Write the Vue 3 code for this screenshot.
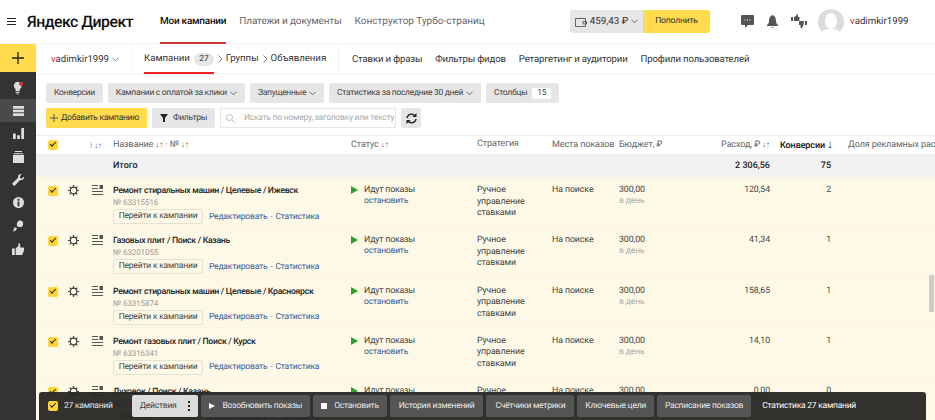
<template>
  <div class="page">
    <header class="top">
      <div class="burger"><i></i><i></i><i></i></div>
      <div class="logo">Яндекс Директ</div>
      <nav class="top-nav">
        <a class="active">Мои кампании</a>
        <a class="pay-link">Платежи и документы</a>
        <a>Конструктор Турбо-страниц</a>
      </nav>
      <div class="wallet">
        <span class="balance">
          <svg width="12" height="10" viewBox="0 0 12 10"><path d="M.5 1.500h10v8H.5zM8 4.500h3.500V7H8z" fill="none" stroke="#666"/></svg>
          <span>459,43 ₽</span>
          <svg width="7" height="5" viewBox="0 0 8 5"><path d="M.5.5 4 4 7.500.5" fill="none" stroke="#555"/></svg>
        </span>
        <span class="pay">Пополнить</span>
      </div>
      <div class="tools">
        <svg width="13" height="13" viewBox="0 0 13 13"><path d="M1 0h11a1 1 0 0 1 1 1v8a1 1 0 0 1-1 1H7l-3 3v-3H1a1 1 0 0 1-1-1V1a1 1 0 0 1 1-1z" fill="#555"/><path d="M3.500 5h1M6 5h1M8.500 5h1" stroke="#fff"/></svg>
        <svg width="11" height="13" viewBox="0 0 11 13"><path d="M5.500 0C3 1 2 3 2 6c0 2-1 3-2 4v1h11v-1c-1-1-2-2-2-4 0-3-1-5-3.500-6zM4 12h3l-1.500 1z" fill="#555"/></svg>
        <svg width="16" height="15" viewBox="0 0 16 15"><path d="M0 3h2v4H0zM3 3l2-1 1-2 1 1v2h1.500v3a1 1 0 0 1-1 1H3zM16 11h-2V7h2zM13 7H9a1 1 0 0 0-1 1v3h1.500v2l1 2 1.500-3 .5-1z" fill="#555"/></svg>
      </div>
      <svg class="avatar" width="26" height="26" viewBox="0 0 26 26"><circle cx="13" cy="13" r="13" fill="#dcdcdc"/><ellipse cx="13" cy="12" rx="6" ry="8" fill="#fff"/><path d="M4 23c3-3 5-3 9-3s6 0 9 3a13 13 0 0 1-18 0z" fill="#fff"/></svg>
      <span class="user"><b>v</b>adimkir1999</span>
    </header>

    <div class="body">
      <aside class="side">
        <div class="plus"><svg width="12" height="12" viewBox="0 0 12 12"><path d="M6 0v12M0 6h12" stroke="#222" stroke-width="1.300"/></svg></div>
        <div class="side-list">
          <div v-for="(item, i) in sideIcons" :key="item" class="side-item" :class="{ current: i === 1 }" v-html="item"></div>
        </div>
      </aside>

      <main class="main">
        <div class="subnav">
          <div class="account"><span><b>v</b>adimkir1999</span>
            <svg width="7" height="5" viewBox="0 0 8 5"><path d="M.5.5 4 4 7.500.5" fill="none" stroke="#666"/></svg>
          </div>
          <div class="crumbs">
            <a class="active">Кампании <span class="count">27</span></a>
            <svg class="sep" width="5" height="8" viewBox="0 0 5 8"><path d="M.5.5 4 4 .5 7.500" fill="none" stroke="#777"/></svg>
            <a>Группы</a>
            <svg class="sep" width="5" height="8" viewBox="0 0 5 8"><path d="M.5.5 4 4 .5 7.500" fill="none" stroke="#777"/></svg>
            <a>Объявления</a>
          </div>
          <div class="links">
            <a v-for="l in subLinks" :key="l">{{ l }}</a>
          </div>
        </div>

        <div class="filters">
          <span v-for="f in filterButtons" :key="f.text" class="btn">{{ f.text }}
            <svg v-if="f.arrow" width="7" height="5" viewBox="0 0 8 5"><path d="M.5.5 4 4 7.500.5" fill="none" stroke="#555"/></svg>
          </span>
          <span class="btn">Столбцы <span class="pill">15</span></span>
        </div>

        <div class="actions">
          <span class="btn add"><span class="add-plus"><svg width="8" height="8" viewBox="0 0 8 8"><path d="M4 0v8M0 4h8" stroke="#555"/></svg></span> Добавить кампанию</span>
          <span class="btn filter">
            <svg width="8" height="8" viewBox="0 0 8 8"><path d="M0 0h8L5 4v4H3V4z" fill="#222"/></svg>
            Фильтры
          </span>
          <div class="search">
            <svg width="9" height="9" viewBox="0 0 9 9"><circle cx="3.500" cy="3.500" r="3" fill="none" stroke="#bbb"/><path d="m6 6 3 3" stroke="#bbb"/></svg>
            <span>Искать по номеру, заголовку или тексту</span>
          </div>
          <span class="btn refresh">
            <svg width="11" height="11" viewBox="0 0 11 11"><path d="M1 5a4.500 4.500 0 0 1 8-2M10 6a4.500 4.500 0 0 1-8 2" fill="none" stroke="#222" stroke-width="1.500"/><path d="M10.500 0v4h-4zM.5 11V7h4z" fill="#222"/></svg>
          </span>
        </div>

        <div class="table">
          <div class="row head">
            <div class="c-check"><span class="check"></span></div>
            <div class="c-sort"><em>⁞</em><em>↓↑</em></div>
            <div class="c-name">Название <em>↓↑</em> · № <em>↓↑</em></div>
            <div class="c-status">Статус <em>↓↑</em></div>
            <div class="c-strat">Стратегия</div>
            <div class="c-place">Места показов</div>
            <div class="c-budget">Бюджет, ₽</div>
            <div class="c-spend">Расход, ₽ <em>↓↑</em></div>
            <div class="c-conv strong">Конверсии <span class="down">↓</span></div>
            <div class="c-share">Доля рекламных расходов</div>
          </div>
          <div class="row total">
            <div class="c-check"></div>
            <div class="c-sort"></div>
            <div class="c-name">Итого</div>
            <div class="c-status"></div>
            <div class="c-strat"></div>
            <div class="c-place"></div>
            <div class="c-budget"></div>
            <div class="c-spend">2 306,56</div>
            <div class="c-conv">75</div>
            <div class="c-share"></div>
          </div>
          <div v-for="c in campaigns" :key="c.id" class="row item">
            <div class="c-check"><span class="check"></span></div>
            <div class="c-sort">
              <svg class="gear" width="11" height="11" viewBox="0 0 12 12"><circle cx="6" cy="6" r="3.600" fill="none" stroke="#444" stroke-width="1.300"/><path d="M6 0v2.500M6 9.500V12M0 6h2.500M9.500 6H12M1.800 1.800l1.800 1.800M8.400 8.400l1.800 1.800M10.200 1.800 8.400 3.600M3.600 8.400l-1.800 1.800" stroke="#444" stroke-width="1.300"/></svg>
              <svg class="lines" width="11" height="10" viewBox="0 0 11 10"><path d="M0 .5h6M0 3.500h6M0 6.500h11M0 9.500h11" stroke="#555"/><rect x="7.500" width="3.500" height="4" fill="#555"/></svg>
            </div>
            <div class="c-name">
              <div class="title">{{ c.name }}</div>
              <div class="num">№ {{ c.id }}</div>
              <div class="links-row">
                <span class="goto">Перейти к кампании</span>
                <a>Редактировать</a> <span class="dot">-</span> <a>Статистика</a>
              </div>
            </div>
            <div class="c-status">
              <div class="running"><span class="play"></span>Идут показы</div>
              <a class="stop">остановить</a>
            </div>
            <div class="c-strat">Ручное управление ставками</div>
            <div class="c-place">На поиске</div>
            <div class="c-budget">300,00<div class="per">в день</div></div>
            <div class="c-spend">{{ c.spend }}</div>
            <div class="c-conv">{{ c.conv }}</div>
            <div class="c-share"></div>
          </div>
        </div>

        <div class="scroll-thumb"></div>

        <div class="bulk">
          <span class="check"></span>
          <span class="bulk-count">27 кампаний</span>
          <span class="bulk-btn light">Действия <span class="dots"><i></i><i></i><i></i></span></span>
          <span class="bulk-btn"><span class="tri"></span>Возобновить показы</span>
          <span class="bulk-btn"><span class="sq"></span>Остановить</span>
          <span class="bulk-btn wide">История изменений</span>
          <span class="bulk-btn wide">Счётчики метрики</span>
          <span class="bulk-btn">Ключевые цели</span>
          <span class="bulk-btn">Расписание показов</span>
          <span class="bulk-plain">Статистика 27 кампаний</span>
        </div>
      </main>
    </div>
  </div>
</template>

<script setup>
const sideIcons = [
  '<svg width="11" height="14" viewBox="0 0 13 15"><path d="M5 0a5 5 0 0 1 3 9v2H3V9a5 5 0 0 1 2-9zM3 12h5v1H3zM4 14h3v1H4z" fill="#ddd"/><circle cx="9.500" cy="2.500" r="2.500" fill="#e0303a"/></svg>',
  '<svg width="11" height="10" viewBox="0 0 12 11"><path d="M0 0h12v3H0zM0 4h12v3H0zM0 8h12v3H0z" fill="#ddd"/></svg>',
  '<svg width="11" height="11" viewBox="0 0 12 12"><path d="M0 6h3v6H0zM4.500 8h3v4h-3zM9 0h3v12H9z" fill="#ddd"/></svg>',
  '<svg width="11" height="12" viewBox="0 0 12 13"><path d="M2 0h8v1H2zM1 2h10v1H1zM0 4h12v9H0z" fill="#ddd"/></svg>',
  '<svg width="12" height="12" viewBox="0 0 13 13"><path d="M13 3 10.500 5 8.500 4 9 1.500 10.500 0C8-.5 6 1.500 6.500 4L0 10.500 2.500 13 9 6.500C11.500 7 13.500 5.500 13 3z" fill="#ddd"/></svg>',
  '<svg width="11" height="11" viewBox="0 0 12 12"><circle cx="6" cy="6" r="6" fill="#ddd"/><path d="M5 5h2v5H5zM5 2h2v2H5z" fill="#333"/></svg>',
  '<svg width="12" height="12" viewBox="0 0 14 13"><path d="M9 0c3 0 4 1 4 4 0 2-1 3-2 4L6 7C5 3 7 0 9 0zM3 8l3 1-2 3-3 1zM8 3h2v2H8z" fill="#ddd"/></svg>',
  '<svg width="12" height="12" viewBox="0 0 13 13"><path d="M0 6h3v7H0zM4 6l3-3V0c2 0 2 2 2 5h4v3l-2 5H4z" fill="#ddd"/></svg>',
]

const subLinks = ['Ставки и фразы', 'Фильтры фидов', 'Ретаргетинг и аудитории', 'Профили пользователей']

const filterButtons = [
  { text: 'Конверсии' },
  { text: 'Кампании с оплатой за клики', arrow: true },
  { text: 'Запущенные', arrow: true },
  { text: 'Статистика за последние 30 дней', arrow: true },
]

const campaigns = [
  { id: 63315516, name: 'Ремонт стиральных машин / Целевые / Ижевск', spend: '120,54', conv: 2 },
  { id: 63201055, name: 'Газовых плит / Поиск / Казань', spend: '41,34', conv: 1 },
  { id: 63315874, name: 'Ремонт стиральных машин / Целевые / Красноярск', spend: '158,65', conv: 1 },
  { id: 63316341, name: 'Ремонт газовых плит / Поиск / Курск', spend: '14,10', conv: 1 },
  { id: 63201056, name: 'Духовок / Поиск / Казань', spend: '0,00', conv: 0 },
]
</script>

<style>
html, body { margin: 0; overflow: hidden; background: #fff; }
</style>

<style scoped>
.page {
  width: 935px;
  height: 420px;
  overflow: hidden;
  font-family: Roboto, "Liberation Sans", sans-serif;
  font-size: 9px;
  color: #333;
  background: #fff;
  text-rendering: geometricPrecision;
}
a { color: inherit; text-decoration: none; }

.top {
  height: 44px;
  display: flex;
  align-items: center;
  box-sizing: border-box;
  border-bottom: 1px solid #f4f4f4;
}
.burger { margin-left: 7px; width: 9px; display: flex; flex-direction: column; gap: 2px; flex: none; }
.burger i { height: 1px; background: #222; }
.logo { margin-left: 11px; font-size: 15.800px; letter-spacing: -.5px; font-weight: 500; color: #111; width: 133px; white-space: nowrap; flex: none; }
.top-nav { display: flex; height: 44px; gap: 13px; width: 410px; flex: none; font-size: 10px; color: #666; white-space: nowrap; }
.top-nav a { line-height: 43px; position: relative; }
.top-nav .active { color: #111; font-weight: 500; letter-spacing: -.25px; }
.top-nav .pay-link { letter-spacing: -.15px; }
.top-nav .active::after {
  content: '';
  position: absolute;
  left: 0;
  right: 0;
  bottom: 0;
  height: 2px;
  background: #c9393a;
}
.wallet {
  display: flex;
  height: 23px;
  border-radius: 3px;
  overflow: hidden;
  flex: none;
  white-space: nowrap;
}
.balance { width: 73px; background: #e6e6e6; display: flex; align-items: center; justify-content: center; gap: 3px; font-size: 9.800px; }
.pay { width: 67px; background: #ffdb4d; text-align: center; line-height: 23px; font-size: 8.500px; letter-spacing: -.15px; }
.tools { margin-left: 31px; display: flex; align-items: center; gap: 13px; flex: none; }
.avatar { margin-left: 11px; flex: none; }
.user { margin-left: 6px; font-size: 9.700px; color: #333; white-space: nowrap; }
.user b, .account b { font-weight: 400; color: #d33; }

.body { display: flex; height: 376px; }
.side { width: 36px; background: #333; flex: none; }
.plus { height: 28px; background: #ffdb4d; display: flex; align-items: center; justify-content: center; }
.side-list { padding-top: 4px; }
.side-item { height: 23px; display: flex; align-items: center; justify-content: center; }
.side-item.current { background: #4a4a4a; }
.main { flex: 1; position: relative; min-width: 0; }

.subnav {
  height: 31px;
  display: flex;
  align-items: center;
  box-sizing: border-box;
  border-bottom: 1px solid #f0f0f0;
  font-size: 9.600px;
  white-space: nowrap;
}
.account { width: 96px; padding-left: 15px; box-sizing: border-box; height: 100%; display: flex; align-items: center; gap: 3px; border-right: 1px solid #f4f4f4; flex: none; }
.crumbs { width: 207px; box-sizing: border-box; padding-left: 12px; height: 100%; display: flex; align-items: center; border-right: 1px solid #f4f4f4; flex: none; }
.crumbs a { line-height: 30px; position: relative; }
.crumbs .active::after {
  content: '';
  position: absolute;
  left: 0;
  right: 0;
  bottom: 0;
  height: 2px;
  background: #e22;
}
.count { display: inline-block; background: #e6e6e6; border-radius: 7px; padding: 0 5px; font-size: 8.500px; line-height: 13px; margin-left: 2px; }
.sep { margin: 0 3px 0 4px; flex: none; }
.links { display: flex; gap: 13px; padding-left: 13px; letter-spacing: -.15px; }

.filters { display: flex; gap: 5px; padding: 8px 0 0 10px; }
.btn {
  height: 20px;
  box-sizing: border-box;
  padding: 0 8px;
  background: #e6e6e6;
  border-radius: 2px;
  display: inline-flex;
  align-items: center;
  gap: 3px;
  font-size: 8.500px;
  letter-spacing: -.3px;
  color: #444;
  white-space: nowrap;
  flex: none;
}
.pill { background: #fff; border-radius: 2px; padding: 0 5px; line-height: 11px; margin-left: 2px; }
.actions { display: flex; gap: 5px; padding: 5px 0 0 10px; align-items: center; }
.add { background: #ffdb4d; width: 101px; padding: 0 4px; color: #333; }
.add-plus { display: flex; }
.filter { gap: 5px; width: 63px; justify-content: center; }
.search {
  width: 176px;
  height: 20px;
  flex: none;
  box-sizing: border-box;
  border: 1px solid #e6e6e6;
  padding-left: 5px;
  display: flex;
  align-items: center;
  gap: 9px;
  font-size: 8.500px;
  letter-spacing: -.25px;
  color: #aaa;
  white-space: nowrap;
  overflow: hidden;
}
.refresh { width: 20px; padding: 0; justify-content: center; }

.table { margin-top: 7px; border-top: 1px solid #eee; }
.row {
  display: grid;
  grid-template-columns: 32px 45px 238px 126px 75px 67px 74px 77px 61px 1fr;
  white-space: nowrap;
}
.head { height: 18px; align-items: center; font-size: 9px; letter-spacing: -.1px; color: #666; }
.head em { font-style: normal; color: #555; font-size: 8px; }
.head .strong { color: #111; font-weight: 500; }
.down { font-size: 11px; line-height: 9px; }
.total {
  height: 23px;
  align-items: center;
  background: #f2f2f2;
  font-weight: 500;
  font-size: 9px;
  color: #222;
  border-top: 1px solid #eee;
  box-sizing: border-box;
}
.item {
  height: 50.300px;
  background: #fef9e6;
  padding-top: 8px;
  box-sizing: border-box;
  font-size: 8.800px;
  letter-spacing: -.1px;
  color: #444;
  border-bottom: 1px solid #faf4df;
}
.c-check { padding-left: 12px; }
.item .c-check { padding-top: 1px; }
.check {
  display: block;
  flex: none;
  width: 10px;
  height: 10px;
  background: #ffd633;
  border-radius: 2px;
  position: relative;
}
.check::after {
  content: '';
  position: absolute;
  left: 2px;
  top: 2px;
  width: 5px;
  height: 2px;
  border-left: 1.300px solid #222;
  border-bottom: 1.300px solid #222;
  transform: rotate(-45deg);
}
.c-sort { display: flex; gap: 13px; color: #666; }
.head .c-sort { padding-left: 22px; gap: 2px; }
.c-share { padding-left: 17px; }
.c-spend, .c-conv { text-align: right; }
.head .c-conv { text-align: left; padding-left: 10px; }
.c-strat { white-space: normal; line-height: 11.500px; }
.item .c-strat { width: 52px; }
.c-status .running { display: flex; align-items: center; gap: 6px; letter-spacing: -.2px; }
.play { width: 0; height: 0; border-left: 7px solid #2ca02c; border-top: 4px solid transparent; border-bottom: 4px solid transparent; }
.stop { display: block; margin: 1px 0 0 13px; color: #325a9c; font-size: 8.500px; letter-spacing: -.2px; }
.per { color: #aaa; font-size: 8.500px; margin-top: 1px; }
.item .c-name { padding-top: 1px; }
.title { font-weight: 500; color: #222; font-size: 8.700px; letter-spacing: -.3px; }
.num { color: #999; font-size: 8px; margin-top: 2px; }
.links-row { margin-top: 2px; display: flex; align-items: center; gap: 3px; color: #325a9c; font-size: 8.500px; letter-spacing: -.2px; }
.goto {
  border: 1px solid #e6e2d2;
  border-radius: 2px;
  height: 15px;
  box-sizing: border-box;
  line-height: 13px;
  width: 90px;
  text-align: center;
  color: #444;
  margin-right: 3px;
  flex: none;
}
.dot { color: #888; }

.scroll-thumb { position: absolute; right: 1px; top: 231px; width: 5px; height: 37px; background: #ccc; border-radius: 1px; }

.bulk {
  position: absolute;
  left: 3px;
  right: 9px;
  bottom: 0;
  height: 28px;
  background: rgba(40, 38, 36, .95);
  border-radius: 3px 3px 0 0;
  display: flex;
  align-items: center;
  gap: 3px;
  padding-left: 9px;
  box-sizing: border-box;
  color: #e8e8e8;
  font-size: 8.500px;
  letter-spacing: -.25px;
  white-space: nowrap;
}
.bulk-count { margin: 0 16px 0 3px; }
.bulk-btn {
  height: 22px;
  padding: 0 8px;
  background: #555;
  border-radius: 2px;
  display: inline-flex;
  align-items: center;
  flex: none;
}
.bulk-btn.wide { padding: 0 9px; }
.bulk-btn.light { background: #ddd; color: #444; }
.dots { display: inline-flex; flex-direction: column; gap: 2px; margin-left: 12px; }
.dots i { width: 2px; height: 2px; background: #222; }
.tri { width: 0; height: 0; border-left: 6px solid #fff; border-top: 3px solid transparent; border-bottom: 3px solid transparent; margin-right: 7px; }
.sq { width: 6px; height: 6px; background: #fff; margin-right: 7px; }
.bulk-plain { padding-left: 8px; color: #fff; }
</style>
